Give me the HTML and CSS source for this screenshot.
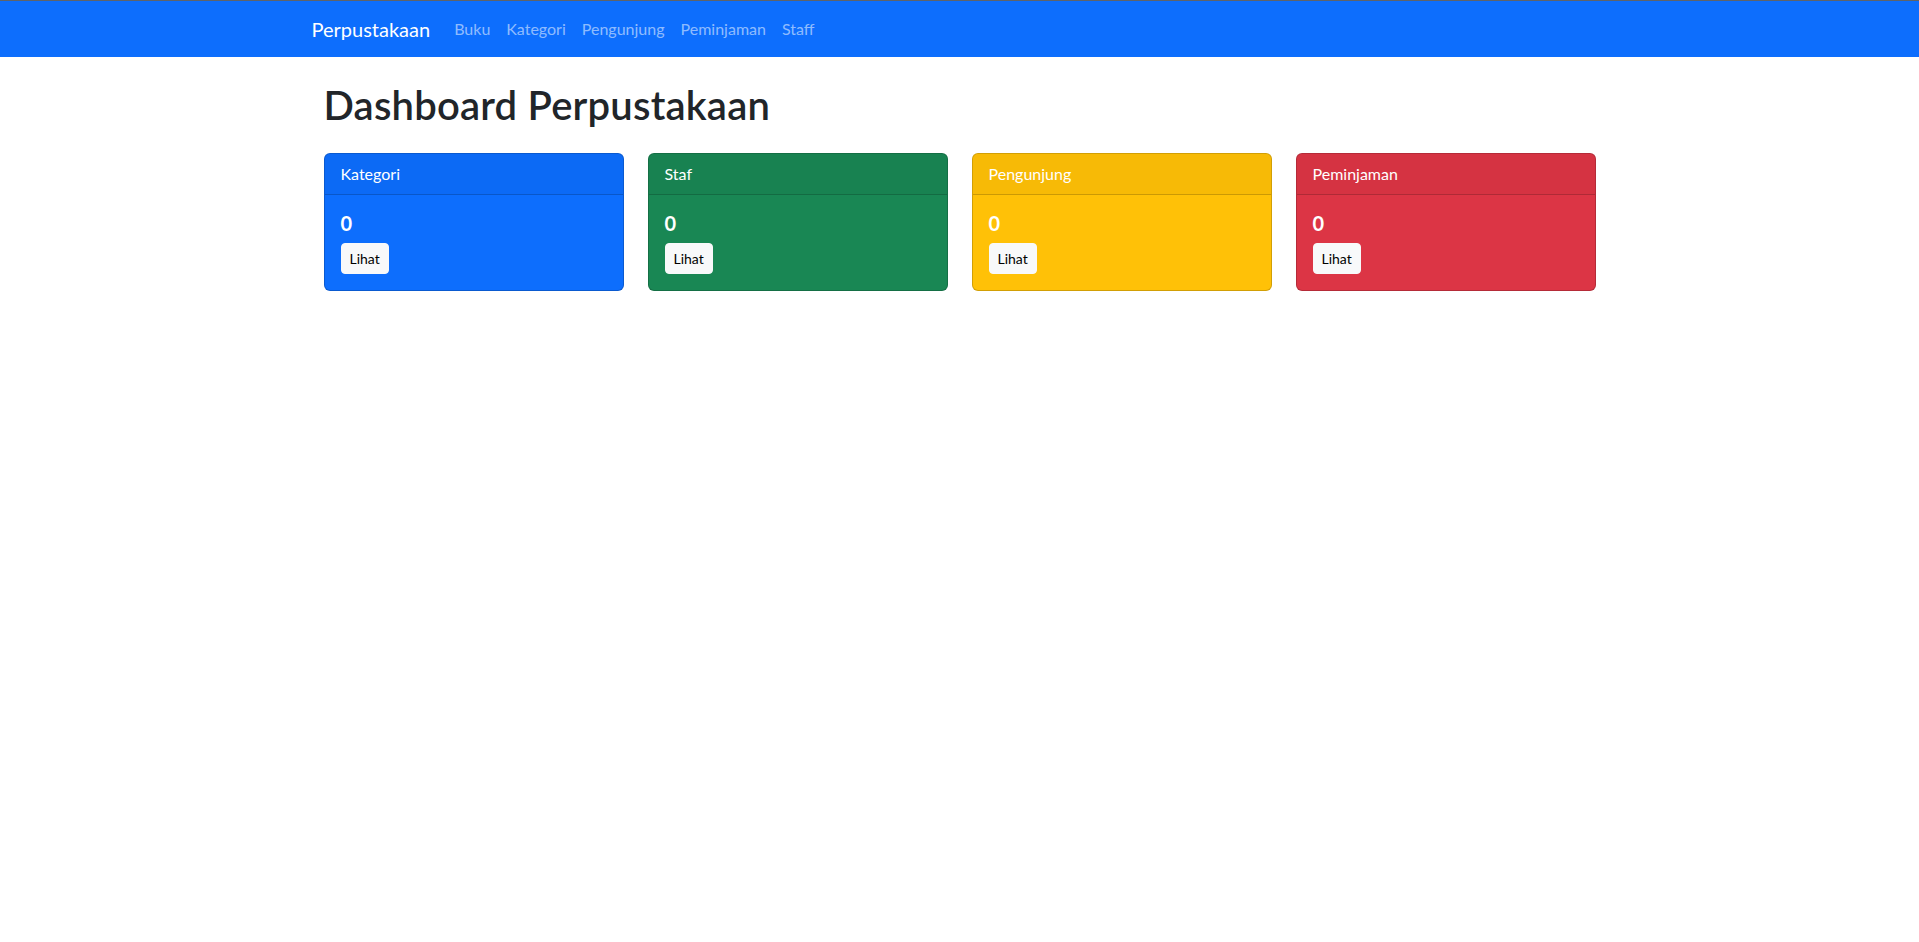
FILE: index.html
```html
<!DOCTYPE html>
<html lang="id">
<head>
<meta charset="utf-8">
<title>Dashboard Perpustakaan</title>
<link rel="stylesheet" href="styles.css">
</head>
<body>
<div class="topline"></div>
<nav class="navbar">
  <div class="nav-container">
    <a class="brand" href="#">Perpustakaan</a>
    <ul class="nav-links">
      <li><a href="#">Buku</a></li>
      <li><a href="#">Kategori</a></li>
      <li><a href="#">Pengunjung</a></li>
      <li><a href="#">Peminjaman</a></li>
      <li><a href="#">Staff</a></li>
    </ul>
  </div>
</nav>
<main class="content">
  <h1 class="title">Dashboard Perpustakaan</h1>
  <div class="cards">
    <div class="card card-primary">
      <div class="card-header">Kategori</div>
      <div class="card-body">
        <h5 class="count">0</h5>
        <a class="btn" href="#">Lihat</a>
      </div>
    </div>
    <div class="card card-success">
      <div class="card-header">Staf</div>
      <div class="card-body">
        <h5 class="count">0</h5>
        <a class="btn" href="#">Lihat</a>
      </div>
    </div>
    <div class="card card-warning">
      <div class="card-header">Pengunjung</div>
      <div class="card-body">
        <h5 class="count">0</h5>
        <a class="btn" href="#">Lihat</a>
      </div>
    </div>
    <div class="card card-danger">
      <div class="card-header">Peminjaman</div>
      <div class="card-body">
        <h5 class="count">0</h5>
        <a class="btn" href="#">Lihat</a>
      </div>
    </div>
  </div>
</main>
</body>
</html>
```
FILE: styles.css
```css
* { box-sizing: border-box; }
html, body { margin: 0; padding: 0; }
body {
  font-family: Lato, "Noto Sans", sans-serif;
  font-size: 16px;
  line-height: 1.5;
  color: #212529;
  background: #fff;
}
a { text-decoration: none; }
.topline { height: 1px; background: #5f6368; }
.navbar { background: #0d6efd; height: 56px; display: flex; align-items: center; }
.nav-container {
  width: 1320px;
  margin: 0 auto;
  padding: 0 12px;
  display: flex;
  align-items: center;
}
.brand {
  color: #fff;
  font-size: 20px;
  line-height: 30px;
  margin-right: 16px;
  padding: 5px 0;
}
.nav-links { list-style: none; margin: 0; padding: 0; display: flex; }
.nav-links a {
  display: block;
  padding: 8px 8px;
  color: rgba(255,255,255,.55);
  font-size: 16px;
  line-height: 24px;
}
.content {
  width: 1272px;
  margin: 24px auto 0;
}
.title {
  font-size: 40px;
  font-weight: 600;
  line-height: 48px;
  margin: 0 0 24px;
  letter-spacing: 0.2px;
}
.cards {
  display: grid;
  grid-template-columns: repeat(4, 1fr);
  gap: 24px;
}
.card {
  border: 1px solid rgba(0,0,0,.175);
  border-radius: 6px;
  color: #fff;
  overflow: hidden;
}
.card-primary { background: #0d6efd; }
.card-success { background: #198754; }
.card-warning { background: #ffc107; }
.card-danger { background: #dc3545; }
.card-header {
  padding: 8px 16px;
  line-height: 24px;
  background: rgba(0,0,0,.03);
  border-bottom: 1px solid rgba(0,0,0,.175);
}
.card-body { padding: 16px; }
.count {
  font-size: 20px;
  font-weight: 700;
  line-height: 24px;
  margin: 0 0 8px;
}
.btn {
  display: inline-block;
  font-size: 14px;
  font-weight: 400;
  line-height: 21px;
  padding: 4px 8px;
  border: 1px solid #f8f9fa;
  border-radius: 4px;
  background: #f8f9fa;
  color: #000;
}
```
